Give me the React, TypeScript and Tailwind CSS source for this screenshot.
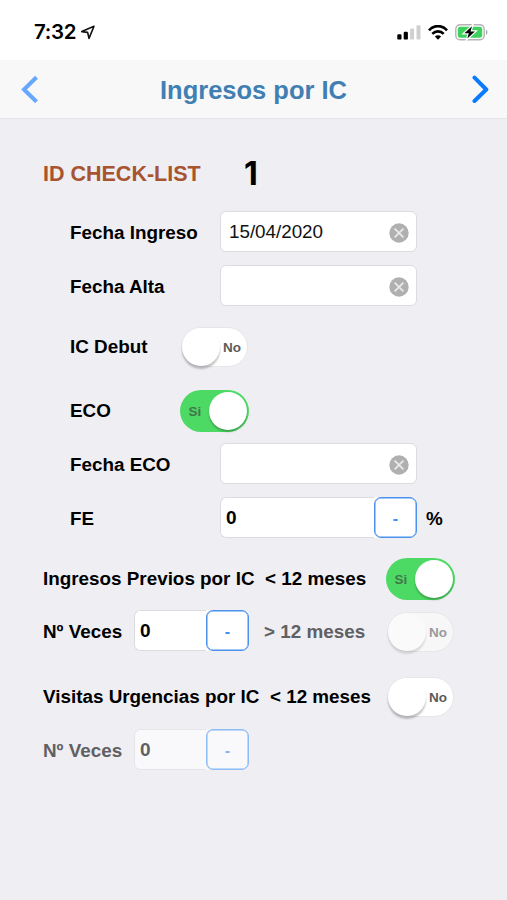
import { useState, type ReactNode } from "react";
import clsx from "clsx";

function StatusBar() {
  return (
    <div className="flex h-[60px] items-center justify-between bg-white pt-1 pr-[19px] pl-[34px]">
      <div className="flex items-center gap-[4px]">
        <span className="font-['Inter',sans-serif] text-[20.5px] leading-6 font-semibold tracking-[-0.3px] text-black">
          7:32
        </span>
        <svg width="16" height="15" viewBox="0 0 16 15" fill="none" aria-hidden="true">
          <path d="M14 1.3 1.8 6.6 7.6 7.4 9 13.4Z" stroke="#111" strokeWidth="1.6" strokeLinejoin="round" />
        </svg>
      </div>
      <div className="flex items-center gap-[7px]">
        <svg width="24" height="15" viewBox="0 0 24 15" aria-hidden="true">
          <rect x="0.3" y="9.2" width="4.2" height="5.4" rx="1.2" fill="#000" />
          <rect x="6.7" y="6.7" width="4.2" height="7.9" rx="1.2" fill="#000" />
          <rect x="13.1" y="3.5" width="4" height="11.1" rx="1.2" fill="#cfcfcf" />
          <rect x="19.5" y="0.3" width="4" height="14.3" rx="1.2" fill="#cfcfcf" />
        </svg>
        <svg width="20" height="15" viewBox="0 0 20 15" fill="none" aria-hidden="true">
          <path d="M1 5.3C6-.3 14-.3 19 5.3" stroke="#000" strokeWidth="2.7" />
          <path d="M4.3 8.8c3.2-3.3 8.2-3.3 11.4 0" stroke="#000" strokeWidth="2.6" />
          <path d="M6.9 11.5c1.8-1.6 4.4-1.6 6.2 0L10 14.7Z" fill="#000" />
        </svg>
        <svg width="33" height="17" viewBox="0 0 33 17" aria-hidden="true">
          <rect x="0.8" y="0.8" width="28.4" height="15" rx="4.2" fill="#fff" stroke="#b4b4b4" strokeWidth="1.4" />
          <rect x="2.8" y="2.8" width="24.4" height="11" rx="2.4" fill="#3fd15d" />
          <path d="M31 5.8c1.9.6 1.9 4.4 0 5Z" fill="#a9a9a9" />
          <path
            d="M17 2.2 9.4 9.3h4.4L12.3 14.6l7.6-7.2h-4.4Z"
            fill="#000"
            stroke="#fff"
            strokeWidth="2.4"
            paintOrder="stroke"
          />
        </svg>
      </div>
    </div>
  );
}

function NavBar() {
  return (
    <header className="flex h-[59px] items-center justify-between border-b border-[#e6e6ea] bg-[#f8f8f8] pr-[18px] pl-[20px]">
      <button type="button" aria-label="Anterior">
        <svg width="18" height="28" viewBox="0 0 18 28" fill="none">
          <path d="M16.5 2.3 4 14.5l12.5 12.2" stroke="#66a8ff" strokeWidth="4" />
        </svg>
      </button>
      <h1 className="pt-[2px] pr-[2px] text-[25.5px] leading-8 font-bold text-[#417fb3]">Ingresos por IC</h1>
      <button type="button" aria-label="Siguiente">
        <svg width="18" height="28" viewBox="0 0 18 28" fill="none">
          <path d="M3.5 2.7 15.3 14.5 3.5 26" stroke="#0a7aff" strokeWidth="4" strokeLinecap="round" strokeLinejoin="round" />
        </svg>
      </button>
    </header>
  );
}

function Row({ className, children }: { className?: string; children: ReactNode }) {
  return <div className={clsx("flex items-center", className)}>{children}</div>;
}

function Label({ className, children }: { className?: string; children: ReactNode }) {
  return (
    <span className={clsx("shrink-0 text-[18.85px] leading-6 font-bold whitespace-pre", className)}>
      {children}
    </span>
  );
}

function DateField({ initial = "" }: { initial?: string }) {
  const [value, setValue] = useState(initial);

  return (
    <div className="flex h-[41px] w-[197px] items-center justify-between rounded-[6px] border border-[#dcdce0] bg-white pr-[7px] pl-[8px]">
      <span className="text-[18.8px] leading-6 text-[#111]">{value}</span>
      <button type="button" aria-label="Borrar" onClick={() => setValue("")}>
        <svg width="20" height="20" viewBox="0 0 20 20" className="mt-[2px]">
          <circle cx="10" cy="10" r="9.7" fill="#b0b0b0" />
          <path d="m5.6 5.6 8.8 8.8m0-8.8-8.8 8.8" stroke="#e9e9e9" strokeWidth="1.8" />
        </svg>
      </button>
    </div>
  );
}

function NumberField({ className, disabled }: { className: string; disabled?: boolean }) {
  return (
    <div
      className={clsx(
        "flex h-[41px] shrink-0 items-center justify-between rounded-[6px]",
        disabled ? "bg-[#f9f9fb]" : "bg-white",
        className
      )}
    >
      <div
        className={clsx(
          "flex h-full flex-1 items-center rounded-l-[6px] border border-r-0 pl-[5px] text-[19px] leading-6 font-bold",
          disabled ? "border-[#e5e5e9] text-[#606063]" : "border-[#dcdce0] text-black"
        )}
      >
        0
      </div>
      <button
        type="button"
        disabled={disabled}
        className={clsx(
          "h-[41px] w-[43px] rounded-[7px] border-[1.5px] pt-[2px] text-[16px] leading-6 font-bold shadow-[inset_0_0_0_0.5px_currentColor]",
          disabled ? "border-[#8dbcf7] text-[#83b7f8]" : "border-[#4c91ec] text-[#4392f1]"
        )}
      >
        -
      </button>
    </div>
  );
}

function Toggle({ initial = false, disabled }: { initial?: boolean; disabled?: boolean }) {
  const [on, setOn] = useState(initial);

  return (
    <button
      type="button"
      role="switch"
      aria-checked={on}
      disabled={disabled}
      onClick={() => setOn(!on)}
      className={clsx(
        "flex shrink-0 items-center rounded-full text-[13.5px] leading-4 font-bold",
        on
          ? "h-[42px] w-[69px] justify-between bg-[#4cd964] pr-[2px] pl-[8.5px] text-[#42764b]"
          : "mx-px h-[40px] w-[67px] flex-row-reverse justify-between border border-[#e6e6e9] pr-[6px]",
        !on && (disabled ? "bg-[#f7f7f8] text-[#999]" : "bg-white text-[#5a5a5a]")
      )}
    >
      <span className="pt-px">{on ? "Si" : "No"}</span>
      <span
        className={clsx(
          "size-[38px] rounded-full",
          disabled
            ? "bg-[#fafafb] shadow-[0_3px_2px_rgba(0,0,0,0.12)]"
            : on
              ? "bg-white shadow-[0_2px_2px_rgba(0,0,0,0.25)]"
              : "bg-white shadow-[0_3px_2px_rgba(0,0,0,0.23)]"
        )}
      />
    </button>
  );
}

export default function App() {
  return (
    <div className="h-[900px] w-[507px] overflow-hidden bg-[#efeef3] font-['Liberation_Sans',Arial,sans-serif] text-black">
      <StatusBar />
      <NavBar />
      <main className="pl-[43px]">
        <Row className="mt-[37px] h-[34px]">
          <span className="w-[201px] pt-px text-[21.5px] leading-7 font-bold text-[#a8542f]">ID CHECK-LIST</span>
          <span className="pt-px font-['Inter',sans-serif] text-[32px] leading-[34px] font-bold">1</span>
        </Row>

        <Row className="mt-[21px] pl-[27px]">
          <Label className="w-[150px] pt-[3px]">Fecha Ingreso</Label>
          <DateField initial="15/04/2020" />
        </Row>
        <Row className="mt-[13px] pl-[27px]">
          <Label className="w-[150px] pt-[3px]">Fecha Alta</Label>
          <DateField />
        </Row>
        <Row className="mt-[20px] h-[42px] pl-[27px]">
          <Label className="w-[110px] pb-px">IC Debut</Label>
          <Toggle />
        </Row>
        <Row className="mt-[22px] h-[42px] pl-[27px]">
          <Label className="w-[110px] pb-px">ECO</Label>
          <Toggle initial />
        </Row>
        <Row className="mt-[11px] pl-[27px]">
          <Label className="w-[150px] pt-[3px]">Fecha ECO</Label>
          <DateField />
        </Row>
        <Row className="mt-[13px] pl-[27px]">
          <Label className="w-[150px] pt-[3px]">FE</Label>
          <NumberField className="w-[197px]" />
          <Label className="pt-[3px] pl-[9px]">%</Label>
        </Row>

        <Row className="mt-[20px] h-[42px]">
          <Label className="w-[343px] pb-px">{"Ingresos Previos por IC  < 12 meses"}</Label>
          <Toggle initial />
        </Row>
        <Row className="mt-[10px] h-[41px]">
          <Label className="w-[91px] pt-[3px]">Nº Veces</Label>
          <NumberField className="w-[115px]" />
          <Label className="w-[137px] pt-[3px] pl-[15px] text-[#606063]">{"> 12 meses"}</Label>
          <div className="pt-[3px]">
            <Toggle disabled />
          </div>
        </Row>
        <Row className="mt-[25px] h-[42px]">
          <Label className="w-[343px] pb-px">{"Visitas Urgencias por IC  < 12 meses"}</Label>
          <Toggle />
        </Row>
        <Row className="mt-[11px]">
          <Label className="w-[91px] pt-[3px] text-[#606063]">Nº Veces</Label>
          <NumberField className="w-[115px]" disabled />
        </Row>
      </main>
    </div>
  );
}
